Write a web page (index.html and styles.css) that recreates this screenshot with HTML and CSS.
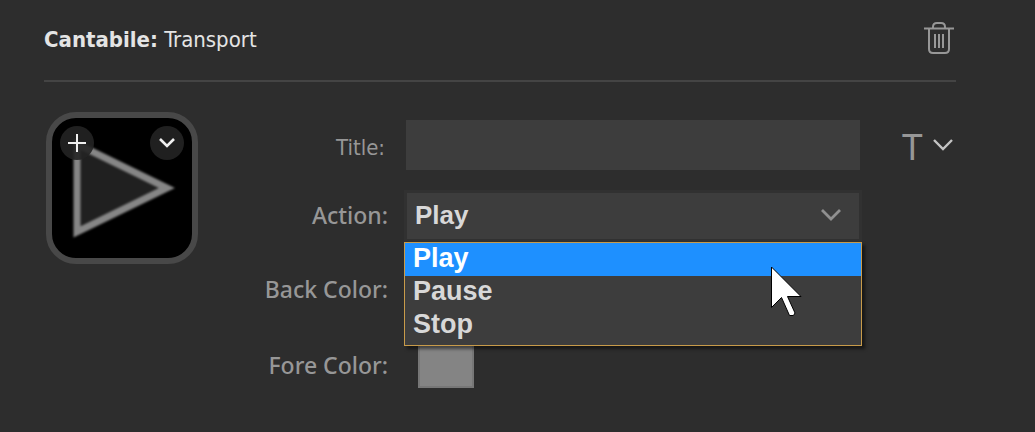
FILE: index.html
```html
<!DOCTYPE html>
<html lang="en">
<head>
    <meta charset="UTF-8">
    <meta name="viewport" content="width=device-width, initial-scale=1.0">
    <title>Cantabile: Transport</title>
    <link rel="stylesheet" href="styles.css">
</head>
<body>
    <header class="header">
        <h1 class="heading"><strong>Cantabile:</strong> Transport</h1>
        <button type="button" class="icon-btn" aria-label="Delete">
            <svg width="30" height="32" viewBox="0 0 30 32" fill="none" stroke="#979797" stroke-width="2">
                <path d="M0 6.500H30M9 6.500V5Q9 1 13 1H17Q21 1 21 5V6.500"/>
                <path d="M5 7V27Q5 31 9 31H21Q25 31 25 27V7"/>
                <path d="M11 12V26M15 12V26M19 12V26"/>
            </svg>
        </button>
    </header>

    <main class="content">
        <div class="key">
            <svg class="key-image" viewBox="0 0 140 140">
                <path d="M25 26V114L115 70Z" fill="#202020" stroke="#868686" stroke-width="7"/>
            </svg>
            <button type="button" class="key-btn" aria-label="Add">
                <svg width="18" height="18" viewBox="0 0 18 18" fill="none" stroke="#f0f0f0" stroke-width="2"><path d="M9 0V18M0 9H18"/></svg>
            </button>
            <button type="button" class="key-btn" aria-label="Choose icon">
                <svg width="16" height="10" viewBox="0 0 16 10" fill="none" stroke="#f0f0f0" stroke-width="2.6"><path d="M1 1L8 8L15 1"/></svg>
            </button>
        </div>

        <form class="form">
            <label class="label label-title" for="title">Title:</label>
            <input type="text" id="title" class="text-box">

            <label class="label" for="action">Action:</label>
            <div class="dropdown">
                <select id="action" class="select">
                    <option>Play</option>
                    <option>Pause</option>
                    <option>Stop</option>
                </select>
                <svg class="select-arrow" width="20" height="12" viewBox="0 0 20 12" fill="none" stroke="#909090" stroke-width="2.8"><path d="M1 1L10 10L19 1"/></svg>
                <ul class="menu" role="listbox" aria-label="Action">
                    <li class="menu-item active" role="option" aria-selected="true">Play</li>
                    <li class="menu-item" role="option">Pause</li>
                    <li class="menu-item" role="option">Stop</li>
                </ul>
                <svg class="cursor" width="32" height="51" viewBox="0 0 32 51" fill="#fff" stroke="#000"><path d="M.5 1V41.500L10.500 31.500L18.500 49.500H22.500L24 47L16.500 30.500H30Z"/></svg>
            </div>

            <label class="label" for="backColor">Back Color:</label>
            <input type="color" id="backColor" class="swatch" value="#000000">

            <label class="label" for="foreColor">Fore Color:</label>
            <input type="color" id="foreColor" class="swatch" value="#848484">
        </form>

        <button type="button" class="icon-btn font-btn" aria-label="Title font">
            T
            <svg width="20" height="12" viewBox="0 0 20 12" fill="none" stroke="#c4c4c4" stroke-width="2.4"><path d="M1 1L10 10L19 1"/></svg>
        </button>
    </main>
</body>
</html>
```

FILE: styles.css
```css
* { box-sizing: border-box; }
body { margin: 0; padding: 0 79px 0 44px; background: #2d2d2d; color: #e4e4e4; font-family: "Noto Sans", "Open Sans", sans-serif; }
button { padding: 0; border: none; cursor: pointer; }

.header { display: flex; align-items: center; justify-content: space-between; height: 82px; padding: 0 2px 4px 0; border-bottom: 2px solid #444; }
.heading { margin: 0; padding-top: 2px; font-family: "DejaVu Sans Condensed", "DejaVu Sans", sans-serif; font-size: 22px; font-weight: normal; font-stretch: condensed; }
.icon-btn { display: flex; align-items: center; background: none; color: #979797; }

.content { display: flex; align-items: flex-start; padding-top: 30px; }

/* key preview */
.key { position: relative; display: flex; flex: none; justify-content: space-between; align-items: flex-start; width: 152px; height: 152px; margin-left: 2px; padding: 8px; border: 6px solid #484848; border-radius: 30px; background: #000; }
.key-image { position: absolute; inset: 0; filter: blur(1px); }
.key-btn { position: relative; display: flex; align-items: center; justify-content: center; width: 34px; height: 34px; border-radius: 50%; background: rgba(36, 36, 36, 0.9); }

/* settings */
.form { display: grid; flex: 1; grid-template-columns: 190px 1fr; grid-template-rows: 50px 52px 56px 56px; gap: 20px 16px; align-items: center; padding-top: 8px; }
.label { padding-bottom: 2px; text-align: right; color: #979797; font-size: 23px; font-weight: 500; }
.label-title { padding: 4px 3px 0 0; font-family: "DejaVu Sans Condensed", "DejaVu Sans", sans-serif; font-size: 22px; font-stretch: condensed; font-weight: normal; }
.text-box { height: 50px; margin: 0 2px; padding: 0 10px; border: none; background: #3d3d3d; color: #d8d8d8; font-size: 22px; }

.dropdown { position: relative; font-family: "Liberation Sans", Arial, sans-serif; font-weight: bold; }
.select { display: block; width: 100%; height: 52px; padding: 0 8px 2px; border: 3px solid #313131; border-radius: 0; background: #3d3d3d; color: #d8d8d8; font: inherit; font-size: 26px; appearance: none; }
.select-arrow { position: absolute; top: 19px; right: 21px; pointer-events: none; }
.menu { position: absolute; top: 100%; left: 0; right: 0; margin: 0; padding: 0 0 3px; border: 1px solid #c89b4a; background: #3d3d3d; box-shadow: 3px 3px 3px rgba(0, 0, 0, 0.5); color: #d8d8d8; font-size: 27px; line-height: 31px; list-style: none; }
.menu-item { padding: 0 8px 2px; }
.menu-item.active { background: #1e90ff; color: #fff; }
.cursor { position: absolute; top: 76px; right: 59px; pointer-events: none; }

.swatch { width: 56px; height: 44px; margin-left: 14px; padding: 0; border: 2px solid #777; background: none; appearance: none; }
.swatch::-webkit-color-swatch-wrapper { padding: 0; }
.swatch::-webkit-color-swatch { border: none; border-radius: 0; }

.font-btn { flex: none; gap: 10px; width: 94px; height: 50px; margin-top: 8px; padding-left: 40px; font-family: "Noto Sans", sans-serif; font-size: 37px; }
```
